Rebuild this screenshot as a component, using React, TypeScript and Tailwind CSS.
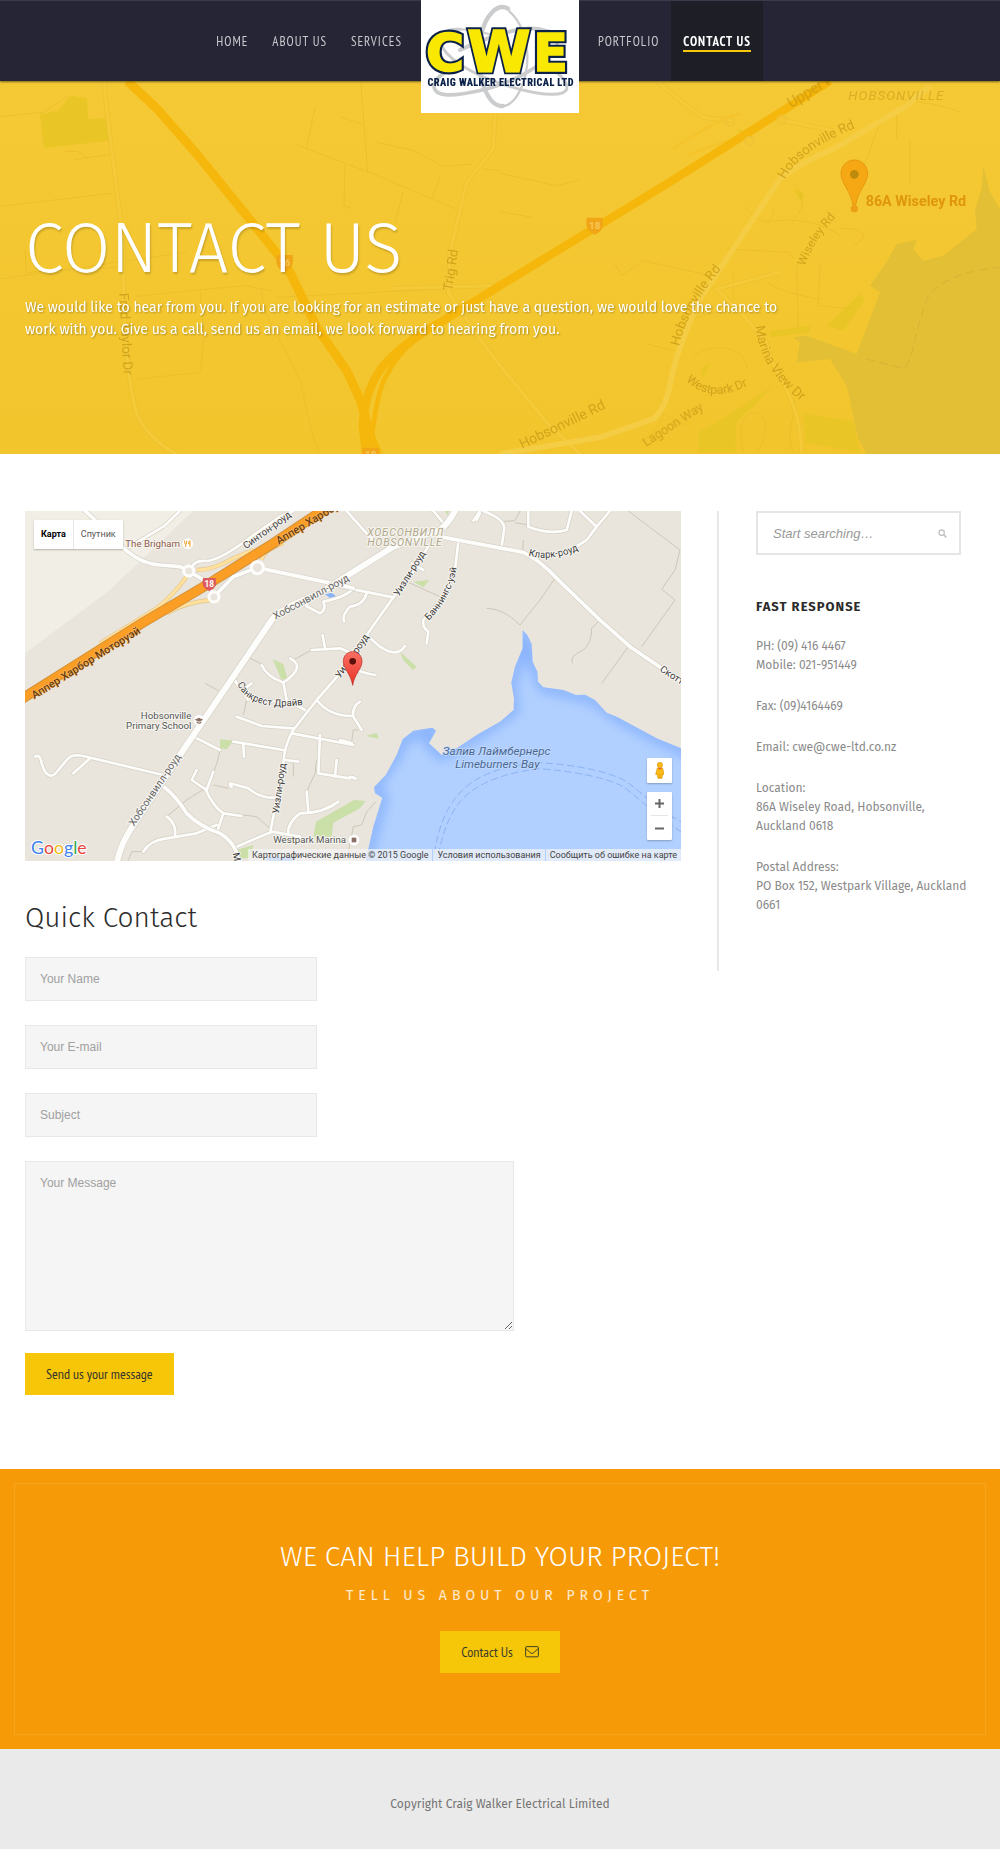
import type { ReactNode } from 'react';

/* ---------- Logo ---------- */

function Logo() {
  return (
    <svg viewBox="33 0 474 339" className="block w-full" role="img" aria-label="Craig Walker Electrical Ltd">
      <rect x="33" width="474" height="339" fill="#fff" />
      <g fill="none" stroke="#cbccce" strokeLinecap="round">
        <path d="M294 26 C262 8 226 45 212 110 C202 160 204 215 222 262 C236 298 256 320 278 318" strokeWidth="13" />
        <path d="M298 34 C330 62 350 110 352 165 C354 235 322 320 272 319" strokeWidth="7" />
        <path d="M150 88 C100 86 78 110 96 140 C125 190 215 238 330 268 C400 286 462 290 470 268 C476 245 440 212 400 188" strokeWidth="9" />
        <path d="M150 88 C200 88 240 102 290 120" strokeWidth="6" />
        <path d="M400 92 C440 94 452 116 436 145 C405 195 310 250 200 274 C125 290 76 290 72 262 C72 240 100 215 140 195" strokeWidth="11" />
        <path d="M405 92 C350 72 250 104 150 150" strokeWidth="12" />
      </g>
      <g
        fontFamily='"DejaVu Sans", sans-serif'
        fontWeight="700"
        fill="#f9e802"
        stroke="#0b2148"
        paintOrder="stroke"
      >
        <text x="48" y="213" fontSize="156" strokeWidth="18">C</text>
        <text x="370" y="214" fontSize="152" strokeWidth="18">E</text>
        <text x="172" y="217" fontSize="172" strokeWidth="16">W</text>
        <g strokeWidth="5" paintOrder="normal">
          <text x="48" y="213" fontSize="156" fill="#f9e802" stroke="#f9e802">C</text>
          <text x="370" y="214" fontSize="152" fill="#f9e802" stroke="#f9e802">E</text>
          <text x="172" y="217" fontSize="172" fill="#f9e802" stroke="#f9e802">W</text>
        </g>
      </g>
      <text
        x="272"
        y="258"
        textAnchor="middle"
        fontFamily='"Roboto Condensed", Roboto, sans-serif'
        fontWeight="900"
        fontSize="31"
        fill="#0b2148"
      >
        CRAIG WALKER ELECTRICAL LTD
      </text>
    </svg>
  );
}

/* ---------- Header ---------- */

function NavLink({ children, active = false }: { children: ReactNode; active?: boolean }) {
  return (
    <a
      href="#"
      aria-current={active ? 'page' : undefined}
      className={
        active
          ? 'flex h-full items-center bg-[#1e1e27] px-3 font-bold text-white'
          : 'flex h-full items-center px-3 text-[#c9c9ce] hover:text-white'
      }
    >
      <span className={active ? 'border-b-2 border-[#f8c809] pt-1 leading-4' : 'pt-0.5 leading-5'}>{children}</span>
    </a>
  );
}

function Header() {
  return (
    <header className="relative z-10 grid h-[81px] grid-cols-[1fr_158px_1fr] items-start border-t border-[#3a3a4a] bg-[#262535] text-[13px] tracking-[1px] shadow-[0_1px_2px_rgba(0,0,0,0.5)] [font-family:'PT_Sans_Narrow',sans-serif]">
      <nav aria-label="Main" className="flex h-20 justify-end pr-[7px]">
        <NavLink>HOME</NavLink>
        <NavLink>ABOUT US</NavLink>
        <NavLink>SERVICES</NavLink>
      </nav>
      <a href="#" className="-mt-px block">
        <Logo />
      </a>
      <nav aria-label="More" className="flex h-20 pl-[7px]">
        <NavLink>PORTFOLIO</NavLink>
        <NavLink active>CONTACT US</NavLink>
      </nav>
    </header>
  );
}

/* ---------- Hero ---------- */

const heroStreets = [
  'M0 113 L130 100 L205 50', 'M0 382 L335 343', 'M195 217 L235 217 L265 237', 'M222 242 L330 226',
  'M0 600 L560 520', 'M75 510 L80 580 L350 565', 'M410 652 L600 632 L735 620 L820 637', 'M600 632 L612 780 L600 880 L410 900',
  'M785 635 C790 730 870 820 905 920 C920 1000 935 1060 955 1120', 'M945 85 L920 205', 'M888 197 L1120 285 L1370 390',
  'M1082 6 L1103 282', 'M1035 255 L1032 380 L1055 388', 'M1210 335 L1185 430', 'M1132 190 L1240 215 L1330 262 L1415 255',
  'M1450 270 L1500 275', 'M1322 290 L1298 355', 'M1020 113 L1085 135', 'M830 655 L1320 630', 'M540 455 L510 500',
  'M1500 283 L1670 320 L1735 303', 'M1500 398 L1600 415', 'M1845 555 L1865 590 L1930 545 L2130 590',
  'M2230 380 C2280 440 2320 440 2320 390', 'M2380 315 C2430 360 2400 400 2370 440', 'M2300 430 C2400 410 2480 440 2520 470',
  'M2180 510 L2370 520 L2380 540', 'M2390 560 L2395 750', 'M2200 585 L2200 660', 'M2300 610 C2350 640 2400 650 2460 660',
  'M2460 560 L2455 680 L2560 690', 'M2520 450 C2580 440 2620 470 2560 500', 'M2040 740 C2100 700 2200 690 2260 700',
  'M2080 830 C2140 790 2240 800 2240 870', 'M1940 795 L2020 815', 'M2060 890 L2120 930 L2200 940 M1980 960 C2010 1010 1970 1060 1920 1090',
  'M2230 1120 C2210 1040 2230 1000 2270 1000 C2310 1020 2300 1080 2270 1120', 'M2380 960 C2400 990 2350 1050 2380 1120',
  'M2630 30 C2700 80 2800 60 2880 100', 'M2690 90 L2690 180 M2730 180 L2730 320', 'M2640 130 L2600 240 L2560 330', 'M2000 1010 L2060 1040',
];

const heroRoads = [
  'M312 6 C320 120 350 300 372 520 C365 700 380 900 412 1010 C440 1070 500 1110 530 1125',
  'M1485 100 L1480 210 L1400 310 L1350 520 L1345 640 L1440 780 L1500 860 L1640 1030 L1740 1125',
  'M1175 628 L1500 620', 'M1970 6 L2060 80 L2110 115 L2190 125 M2350 125 L2500 155', 'M2340 580 L2150 630 L2230 710 L2300 790 C2310 880 2400 940 2405 1120',
];

function HeroMap() {
  return (
    <svg
      viewBox="0 6 3000 1119"
      preserveAspectRatio="xMidYMid slice"
      className="absolute inset-0 h-full w-full"
      aria-hidden="true"
    >
      <defs>
        <linearGradient id="heroLand" x1="0" y1="0" x2="0" y2="1">
          <stop offset="0" stopColor="#f5c935" />
          <stop offset="1" stopColor="#f2c52d" />
        </linearGradient>
      </defs>
      <rect width="3000" height="1130" fill="url(#heroLand)" />
      <path
        d="M2950 262 L2970 340 L3000 390 V1125 H2600 L2575 1080 L2540 920 L2490 840 L2390 850 L2400 790 L2380 775 L2420 770 L2570 825 L2640 640 L2610 620 L2660 550 L2690 495 L2750 482 L2740 510 L2770 545 L2830 530 L2930 450 L2925 390 L2945 330 Z"
        fill="#e2bf35"
      />
      <path d="M2600 840 L2710 868 Q2730 860 2750 760 L2780 660 Q2830 580 3000 565" fill="none" stroke="#d8b636" strokeWidth="4" strokeDasharray="26 14" />
      <g fill="#e9c625">
        <path d="M120 105 L175 95 L210 50 L260 58 L265 120 L323 118 L327 185 L132 207 Z" />
        <path d="M2410 1005 L2560 1025 L2580 1120 L2415 1090 Z" />
        <path d="M2095 1060 L2200 1000 L2320 920 L2210 1030 L2205 1120 H2095 Z" />
        <path d="M2480 740 L2580 645 L2595 660 L2530 755 Z M2310 755 L2430 740 L2430 760 L2310 775 Z" />
        <path d="M2105 870 L2130 850 L2110 900 Z M2380 330 L2412 345 L2405 370 Z M2675 312 L2710 340 Z M2210 150 L2240 155 L2220 162 Z" />
      </g>
      <g fill="none" stroke="#e8bb2a" strokeWidth="3" opacity="0.7">
        {heroStreets.map((d) => <path key={d} d={d} />)}
      </g>
      <g fill="none">
        <g stroke="#ecc02d" strokeWidth="14">{heroRoads.map((d) => <path key={d} d={d} />)}</g>
        <g stroke="#f5ca38" strokeWidth="10">{heroRoads.map((d) => <path key={d} d={d} />)}</g>
        <path d="M1500 1125 L1800 1075 L1960 1020 Q1995 990 2010 920 Q2025 820 2100 660 L2340 300 Q2400 250 2500 210 L2720 80 L2790 20" stroke="#f5cd45" strokeWidth="17" />
        <path d="M2020 210 Q2150 120 2220 105 M2060 230 Q2200 175 2260 170" stroke="#f5c32b" strokeWidth="8" />
        <g stroke="#f5b70c">
          <path d="M382 6 L470 88 L590 225 L720 385 L860 560 L950 745 L1040 875 L1080 960 L1118 1090 L1135 1125" strokeWidth="27" />
          <path d="M1098 1125 L1088 1040 Q1095 930 1150 860 Q1210 790 1330 725 L1500 620 L2000 315 L2490 6" strokeWidth="25" />
          <path d="M1115 1085 Q1130 930 1165 880 Q1200 810 1280 760" strokeWidth="14" />
        </g>
        <g stroke="#f0c236" strokeWidth="5">
          <circle cx="2190" cy="128" r="13" />
          <circle cx="2345" cy="122" r="13" />
          <circle cx="2248" cy="186" r="13" />
        </g>
      </g>
      <g fill="#f0a616">
        <path d="M1760 416 H1808 Q1815 455 1784 467 Q1753 455 1760 416 Z" />
        <path d="M830 528 H878 Q885 567 854 579 Q823 567 830 528 Z" />
        <path d="M1088 1106 H1136 Q1143 1145 1112 1157 Q1081 1145 1088 1106 Z" />
      </g>
      <g fontFamily="Roboto, sans-serif" fontSize="40" fill="#bb8d10" opacity="0.6">
        <g fontSize="29" fontWeight="700" fill="#fbe08a" textAnchor="middle">
          <text x="1784" y="451">18</text>
          <text x="854" y="562">16</text>
          <text x="1112" y="1138">18</text>
        </g>
        <text x="2545" y="64" fontStyle="italic" fontSize="40" letterSpacing="3" opacity="0.75">HOBSONVILLE</text>
        <text transform="translate(2374 88) rotate(-32)" fontSize="44">Upper Harbour</text>
        <text transform="translate(1357 637) rotate(-82)" fontSize="40">Trig Rd</text>
        <text transform="translate(358 643) rotate(87)">Fred Taylor Dr</text>
        <text transform="translate(1567 1110) rotate(-26)" fontSize="42">Hobsonville Rd</text>
        <path id="hobA" d="M2355 302 Q2400 210 2580 142" fill="none" />
        <text><textPath href="#hobA">Hobsonville Rd</textPath></text>
        <path id="hobB" d="M2038 802 Q2060 690 2180 550" fill="none" />
        <text><textPath href="#hobB">Hobsonville Rd</textPath></text>
        <path id="wis" d="M2415 562 Q2440 480 2530 390" fill="none" />
        <text fontSize="36"><textPath href="#wis">Wiseley Rd</textPath></text>
        <path id="mar" d="M2267 742 Q2280 890 2450 1000" fill="none" />
        <text fontSize="40"><textPath href="#mar">Marina View Dr</textPath></text>
        <path id="west" d="M2058 905 Q2140 985 2270 905" fill="none" />
        <text fontSize="37"><textPath href="#west">Westpark Dr</textPath></text>
        <text transform="translate(1938 1104) rotate(-33)" fontSize="38">Lagoon Way</text>
      </g>
      <g>
        <path d="M2563 243 C2538 243 2523 263 2523 285 C2523 312 2552 335 2559 378 H2567 C2574 335 2603 312 2603 285 C2603 263 2588 243 2563 243 Z" fill="#f5a714" stroke="#e6980f" strokeWidth="3" />
        <circle cx="2563" cy="286" r="13" fill="#bd8a0c" />
        <circle cx="2563" cy="389" r="11" fill="#eea014" />
        <text x="2597" y="382" fontFamily="Roboto, sans-serif" fontWeight="700" fontSize="43" fill="#df960a">86A Wiseley Rd</text>
      </g>
    </svg>
  );
}

function Hero() {
  return (
    <section className="relative overflow-hidden bg-[#f4c731] px-[25px] pb-[113px] pt-[133px] text-white">
      <HeroMap />
      <div className="relative">
        <h1 className="text-[70px] font-light leading-[70px] [text-shadow:1px_2px_2px_rgba(0,0,0,0.18)]">CONTACT US</h1>
        <p className="mt-[13px] max-w-[780px] text-sm leading-[22px] [text-shadow:1px_1px_2px_rgba(0,0,0,0.3)]">
          We would like to hear from you. If you are looking for an estimate or just have a question, we would love the
          chance to work with you. Give us a call, send us an email, we look forward to hearing from you.
        </p>
      </div>
    </section>
  );
}

/* ---------- Location map ---------- */

const mainRoads = [
  'M350 1090 Q362 1030 400 975 L560 735 L700 530 L815 360 Q840 325 960 280 L1040 228 L1180 140 L1320 90 Q1345 70 1365 33',
];

const midRoads = [
  'M255 33 L330 100 Q400 190 480 195 L540 200 L566 213 L628 250 L642 290 L700 230 L772 203 L985 248 L1060 265',
  'M485 855 Q530 890 560 940 Q600 980 660 1000 Q710 1030 715 1085',
  'M1320 110 L1570 157 Q1620 180 1670 235 L1800 360 L1890 440 L1985 505 L2050 550',
];

const smallRoads = [
  'M380 145 L490 80 L540 33', 'M575 205 Q580 180 620 183 Q660 180 740 120 L840 50 L880 33',
  'M105 770 Q120 760 125 790 Q140 840 165 822 L200 780 Q215 760 250 768 L490 825', 'M270 775 L220 820',
  'M1040 33 L1135 140', 'M1020 260 L1180 292 M1300 33 L1340 80',
  'M1290 130 L1240 215 L1180 292 L1100 405 L1020 520 L950 600 L880 690 Q850 740 850 800 L810 1000',
  'M1375 125 L1365 210 L1330 290 L1270 360 Q1265 380 1285 395 L1280 430',
  'M1450 33 Q1520 60 1512 90 L1505 140', 'M1440 33 L1420 62', 'M1585 33 L1585 80 Q1650 105 1700 90 L1715 33', 'M1740 33 L1790 80 L1760 120 L1720 145 M1830 33 L1790 80',
  'M1100 405 L1140 440 Q1190 475 1215 438', 'M1060 505 Q1090 520 1127 525', 'M1100 280 Q1090 315 1050 320 Q1025 345 1032 365',
  'M985 260 Q930 280 918 318 L960 340 Q980 330 970 305 Q1040 290 1060 265', 'M968 405 L975 445 M935 450 L1020 445 Q1060 460 1070 475',
  'M700 535 L745 600 M730 570 L755 550', 'M785 495 Q800 530 850 548 Q920 500 870 475 M850 548 L860 600 L915 630',
  'M700 535 Q740 610 890 608', 'M710 650 L785 678 L880 685', 'M875 700 L1060 735 M960 705 L955 820 L1050 835', 'M1010 780 L1005 830',
  'M950 600 Q990 650 1060 648 M1080 605 Q1055 620 1060 650 L1085 690', 'M1020 720 L1055 730 M1050 830 Q1080 840 1058 832',
  'M580 710 L660 750', 'M700 725 L850 750 M730 735 L732 770', 'M590 810 L575 840 L620 870 L640 815 M615 865 Q640 920 670 940 L650 1000',
  'M670 940 L725 948', 'M690 855 Q700 870 690 850 L745 865 Q780 895 825 893', 'M855 780 L895 785', 'M920 875 L925 935 M1015 905 Q970 940 900 940 Q860 970 865 1005',
  'M500 950 Q530 970 525 1010', 'M430 1055 Q450 1020 500 1015 L590 1000 L650 975', 'M710 1040 L815 995 L900 1010', 'M1235 190 L1270 210', 'M1440 40 L1430 60',
];

const paths = [
  'M615 550 L655 572', 'M745 472 L790 495', 'M880 480 L935 450', 'M1220 245 L1320 290', 'M1460 325 Q1510 325 1560 375 L1620 300 L1665 235',
  'M1570 120 L1568 155', 'M1500 65 L1545 62 L1560 33 M1545 68 L1585 75', 'M1885 33 L2040 150 L2025 210 L1985 268 L2025 300 L1925 440', 'M1885 440 L1805 550',
  'M1800 360 L1775 385 Q1775 430 1750 450 Q1705 470 1718 490', 'M660 750 Q650 800 640 815 M640 855 L685 865', 'M500 950 L560 900 L615 865',
  'M950 780 L945 820 L920 875', 'M730 945 L770 950 L815 990', 'M880 785 L880 830', 'M1128 905 L1100 935 L1085 975 L1060 980 L1040 1082',
  'M740 600 L730 645', 'M385 1082 L395 1055 L430 1055', 'M1075 690 L1060 690 L1055 725',
];

const parks = [
  'M818 478 L850 492 L862 535 L845 540 Z', 'M1200 455 L1250 500 L1238 510 L1210 480 Z', 'M1240 245 L1288 240 L1270 262 Z',
  'M660 718 L700 722 L680 748 L660 745 Z', 'M1097 708 L1130 698 L1136 716 Z', 'M948 965 L1062 900 L1097 903 L1080 925 L1000 968 L995 1010 L940 1010 Z', 'M710 1050 L760 1035 L750 1075 L715 1075 Z', 'M1335 33 L1348 33 L1342 45 Z',
];

function RoadSet({ roads, width }: { roads: string[]; width: number }) {
  return (
    <g fill="none" strokeLinecap="round" strokeLinejoin="round">
      {roads.map((d) => <path key={`c${d}`} d={d} stroke="#d6d1c6" strokeWidth={width + 4} />)}
      {roads.map((d) => <path key={d} d={d} stroke="#fdfdfb" strokeWidth={width} />)}
    </g>
  );
}

function AreaMap() {
  return (
    <svg viewBox="75 33 1968 1050" className="block w-full" role="img" aria-label="Map of Hobsonville">
      <defs>
        <clipPath id="bayClip"><use href="#bay" /></clipPath>
        <filter id="soft" x="-10%" y="-10%" width="120%" height="120%"><feGaussianBlur stdDeviation="18" /></filter>
        <linearGradient id="pin" x1="0" y1="0" x2="0" y2="1">
          <stop offset="0" stopColor="#fb7064" />
          <stop offset="1" stopColor="#e93125" />
        </linearGradient>
      </defs>
      <rect x="75" y="33" width="1968" height="1050" fill="#e9e5dd" />
      <path d="M75 33 H580 L430 175 L330 270 L75 460 Z" fill="#f0eee5" />
      <g fill="#cbdfa9">{parks.map((d) => <path key={d} d={d} />)}</g>
      <path
        id="bay"
        d="M1568 390 L1582 405 L1595 432 L1598 485 L1612 515 L1614 545 L1630 562 L1690 570 L1728 585 L1755 584 L1785 600 L1820 638 L1850 650 L1970 715 L2043 745 V1083 H1097 L1120 980 L1147 893 L1125 880 L1122 862 L1158 824 L1190 765 L1208 718 L1240 692 L1298 683 L1308 692 L1287 730 L1325 765 L1370 745 L1430 705 L1500 665 L1541 630 L1542 595 L1534 548 L1545 500 L1568 445 Z"
        fill="#b1d0ff"
      />
      <g clipPath="url(#bayClip)">
        <path
          d="M2080 765 L1970 715 L1850 650 L1785 600 L1728 585 L1630 562 L1598 485 L1568 390 L1568 445 L1534 548 L1541 630 L1430 705 L1325 765 L1287 730 L1298 683 L1208 718 L1190 765 L1122 862 L1147 893 L1097 1083"
          fill="none"
          stroke="#86b0fc"
          strokeWidth="30"
          filter="url(#soft)"
        />
      </g>
      <path d="M975 283 L995 278 L1010 290 L990 294 Z M800 1070 H880 V1083 H800 Z" fill="#8ab4f8" />
      <g fill="none" stroke="#8bb2f2" strokeWidth="3" strokeDasharray="22 10">
        <path d="M1303 1060 Q1320 950 1370 890 Q1440 800 1620 788 Q1800 800 1880 845 Q1920 875 1980 930 L2043 965" />
        <path d="M1315 1065 Q1335 960 1380 905 Q1450 825 1620 806 Q1790 820 1870 860 Q1910 890 1970 945 L2043 995" />
      </g>
      <g fill="none" stroke="#cdc7b8" strokeWidth="3">{paths.map((d) => <path key={d} d={d} />)}</g>
      <g fill="none">
        <g stroke="#e2c690" strokeWidth="13">
          <path d="M300 430 L470 325 Q520 285 560 230 M590 210 Q640 210 700 175 L760 150 M500 340 Q560 305 635 300 M785 180 Q790 150 850 130" />
        </g>
        <g stroke="#ffe09c" strokeWidth="9">
          <path d="M300 430 L470 325 Q520 285 560 230 M590 210 Q640 210 700 175 L760 150 M500 340 Q560 305 635 300 M785 180 Q790 150 850 130" />
        </g>
      </g>
      <RoadSet roads={smallRoads} width={8} />
      <RoadSet roads={midRoads} width={11} />
      <RoadSet roads={mainRoads} width={18} />
      <g fill="none">
        <path d="M60 600 L425 370 L628 250 L820 130 L985 20" stroke="#d4913a" strokeWidth="31" />
        <path d="M60 600 L425 370 L628 250 L820 130 L985 20" stroke="#fb9e25" strokeWidth="25" />
      </g>
      <g fill="#e9e5dd" stroke="#fdfdfb" strokeWidth="9">
        <circle cx="566" cy="213" r="15" />
        <circle cx="772" cy="203" r="18" />
        <circle cx="642" cy="291" r="15" />
      </g>
      <path d="M609 234 H647 Q655 264 628 273 Q601 264 609 234 Z" fill="#dd5b5f" />
      <g
        fontFamily="Roboto, sans-serif"
        fontSize="29"
        fill="#3a3a3a"
        stroke="#f7f5f0"
        strokeWidth="6"
        strokeLinejoin="round"
        paintOrder="stroke"
      >
        <text x="628" y="260" textAnchor="middle" fontSize="25" fontWeight="700" fill="#fff" stroke="none">18</text>
        <g fill="#6b3c0c" stroke="#fbc16e" strokeWidth="3" fontSize="33" fontWeight="500">
          <text transform="translate(103 598) rotate(-32)">Аппер Харбор Моторуэй</text>
          <text transform="translate(836 134) rotate(-31)">Аппер Харбор</text>
        </g>
        <text transform="translate(738 148) rotate(-36)">Синтон-роуд</text>
        <text transform="translate(826 359) rotate(-28)" fontSize="31" fill="#666">Хобсонвилл-роуд</text>
        <text transform="translate(402 980) rotate(-56)" fontSize="31" fill="#666">Хобсонвилл-роуд</text>
        <path id="sancrest" d="M712 552 Q750 640 925 612" fill="none" stroke="none" />
        <text><textPath href="#sancrest">Санкрест Драйв</textPath></text>
        <text transform="translate(836 942) rotate(-82)">Уизли-роуд</text>
        <text transform="translate(1196 290) rotate(-58)">Уизли-роуд</text>
        <text transform="translate(1020 536) rotate(-55)">Уизли-роуд</text>
        <path id="bann" d="M1286 362 Q1360 290 1374 180" fill="none" stroke="none" />
        <text><textPath href="#bann">Баннингс-уэй</textPath></text>
        <path id="clark" d="M1585 166 Q1660 190 1770 135" fill="none" stroke="none" />
        <text><textPath href="#clark">Кларк-роуд</textPath></text>
        <text transform="translate(1978 512) rotate(33)">Скотт-роуд</text>
        <text transform="translate(698 1060) rotate(80)">Марина</text>
        <text x="540" y="140" textAnchor="end" fill="#8d5b4c">The Brigham</text>
        <g textAnchor="end" fill="#555">
          <text x="574" y="656">Hobsonville</text>
          <text x="574" y="686">Primary School</text>
          <text x="1038" y="1030">Westpark Marina</text>
        </g>
        <g fontStyle="italic" fontSize="32" letterSpacing="2" fill="#b0a88c">
          <text x="1102" y="107">ХОБСОНВИЛЛ</text>
          <text x="1102" y="138">HOBSONVILLE</text>
        </g>
        <g fontStyle="italic" fontSize="35" textAnchor="middle" fill="#49678f" stroke="#c4dbff" strokeWidth="4">
          <text x="1490" y="766">Залив Лаймбернерс</text>
          <text x="1492" y="804">Limeburners Bay</text>
        </g>
        <text x="93" y="1062" fontFamily="Lato, sans-serif" fontSize="53" stroke="#fff">
          <tspan fill="#3d82f0">G</tspan>
          <tspan fill="#e8453c">o</tspan>
          <tspan fill="#f5b912">o</tspan>
          <tspan fill="#3d82f0">g</tspan>
          <tspan fill="#34a853">l</tspan>
          <tspan fill="#e8453c">e</tspan>
        </text>
      </g>
      <circle cx="563" cy="131" r="16" fill="#fff" />
      <path d="M554 122 V129 Q554 132 557 132 V141 M560 122 V129 Q560 132 557 132 M570 141 V122 Q565 124 566 132 H570" fill="none" stroke="#f0a02c" strokeWidth="3" />
      <circle cx="597" cy="661" r="16" fill="#fff" />
      <path d="M584 659 L597 653 L610 659 L597 665 Z M590 664 V669 Q597 674 604 669 V664 L597 668 Z" fill="#8d6e63" />
      <circle cx="1062" cy="1020" r="16" fill="#fff" />
      <rect x="1055" y="1013" width="14" height="14" fill="#8d6e63" />
      <path
        d="M1058 455 C1040 455 1030 469 1030 484 C1030 507 1052 520 1058 556 C1064 520 1086 507 1086 484 C1086 469 1076 455 1058 455 Z"
        fill="url(#pin)"
        stroke="#b3271f"
        strokeWidth="2"
      />
      <circle cx="1058" cy="484" r="10" fill="#5c100c" />
    </svg>
  );
}

function LocationMap() {
  return (
    <div className="relative overflow-hidden text-[9px] [font-family:Roboto,sans-serif]">
      <AreaMap />
      <div className="absolute left-[9px] top-[9px] flex h-[29px] rounded-[1px] bg-white shadow-[0_1px_2px_rgba(0,0,0,0.25)]">
        <button type="button" className="border-r border-[#e6e6e6] px-[7px] font-bold text-black">Карта</button>
        <button type="button" className="px-[7px] text-[#565656]">Спутник</button>
      </div>
      <div className="absolute bottom-[21px] right-[9px] flex w-[25px] flex-col gap-[9px]">
        <button
          type="button"
          aria-label="Street View"
          className="flex h-[25px] items-center justify-center rounded-[1px] bg-white shadow-[0_1px_2px_rgba(0,0,0,0.25)]"
        >
          <svg viewBox="0 0 30 52" className="h-[17px]" aria-hidden="true">
            <circle cx="15" cy="9" r="8" fill="#fbb916" stroke="#d8930d" strokeWidth="2" />
            <path d="M7 18 H23 L28 38 L23 39 L21 50 H9 L7 39 L2 38 Z" fill="#fbb916" stroke="#d8930d" strokeWidth="2" />
            <path d="M10 18 L15 24 L20 18 Z" fill="#e5552b" />
            <path d="M15 36 V50" stroke="#d8930d" strokeWidth="2" />
          </svg>
        </button>
        <div className="flex flex-col rounded-[1px] bg-white px-1 shadow-[0_1px_2px_rgba(0,0,0,0.25)]">
          <button type="button" aria-label="Zoom in" className="flex h-6 items-center justify-center border-b border-[#e6e6e6]">
            <svg viewBox="0 0 9 9" className="h-[9px]" aria-hidden="true"><path d="M0 4.5H9M4.5 0V9" stroke="#666" strokeWidth="2" /></svg>
          </button>
          <button type="button" aria-label="Zoom out" className="flex h-6 items-center justify-center">
            <svg viewBox="0 0 9 9" className="h-[9px]" aria-hidden="true"><path d="M0 4.5H9" stroke="#666" strokeWidth="2" /></svg>
          </button>
        </div>
      </div>
      <div className="absolute bottom-0 right-0 flex gap-px whitespace-nowrap leading-3 text-[#444]">
        <span className="bg-[#f5f5f5]/70 px-1">Картографические данные © 2015 Google</span>
        <a href="#" className="bg-[#f5f5f5]/70 px-1">Условия использования</a>
        <a href="#" className="bg-[#f5f5f5]/70 px-1">Сообщить об ошибке на карте</a>
      </div>
    </div>
  );
}

/* ---------- Form ---------- */

function Field({ id, label, type = 'text' }: { id: string; label: string; type?: string }) {
  return (
    <div>
      <label htmlFor={id} className="sr-only">{label}</label>
      <input
        id={id}
        type={type}
        placeholder={label}
        className="block h-11 w-full max-w-[292px] border border-[#e8e8e8] bg-[#f5f5f5] px-[14px] text-xs placeholder:text-[#a0a0a0] [font-family:'Liberation_Sans',sans-serif]"
      />
    </div>
  );
}

function ContactForm() {
  return (
    <form className="mt-10">
      <h2 className="text-[28px] font-light leading-[34px] text-[#2c2c2c]">Quick Contact</h2>
      <div className="mt-[22px] flex flex-col gap-6">
        <Field id="name" label="Your Name" />
        <Field id="email" label="Your E-mail" type="email" />
        <Field id="subject" label="Subject" />
        <div>
          <label htmlFor="message" className="sr-only">Your Message</label>
          <textarea
            id="message"
            placeholder="Your Message"
            className="block h-[170px] w-full max-w-[489px] resize border border-[#e8e8e8] bg-[#f5f5f5] px-[14px] py-[13px] text-xs leading-4 placeholder:text-[#a0a0a0] [font-family:'Liberation_Sans',sans-serif]"
          />
        </div>
      </div>
      <button
        type="submit"
        className="mt-[22px] h-[42px] bg-[#f8c609] px-[21px] text-sm text-[#33332c] [font-family:'PT_Sans_Narrow',sans-serif]"
      >
        Send us your message
      </button>
    </form>
  );
}

/* ---------- Sidebar ---------- */

function Sidebar() {
  return (
    <aside className="w-[258px] shrink-0 self-start border-l-2 border-[#e8e8e8] pb-14 pl-[37px]">
      <form role="search" className="flex h-[44px] max-w-[205px] items-center border-2 border-[#e5e5e5] bg-white pl-[15px] pr-3">
        <label htmlFor="search" className="sr-only">Search</label>
        <input
          id="search"
          type="text"
          placeholder="Start searching…"
          className="h-full min-w-0 flex-1 text-[13px] italic outline-none placeholder:text-[#999] [font-family:'Liberation_Sans',sans-serif]"
        />
        <button type="submit" aria-label="Search">
          <svg viewBox="0 0 27 27" className="h-[9px] w-[9px]" fill="none" stroke="#c4c4c4" aria-hidden="true">
            <circle cx="11" cy="11" r="8" strokeWidth="4" />
            <path d="M17 17 L25 25" strokeWidth="5" />
          </svg>
        </button>
      </form>
      <h3 className="mt-[42px] text-[13px] font-bold leading-5 tracking-[1px] text-[#2b2b2b]">FAST RESPONSE</h3>
      <address className="mt-5 flex flex-col gap-[22px] text-xs leading-[19px] text-[#8a8a8a] not-italic">
        <p>PH: (09) 416 4467<br />Mobile: 021-951449</p>
        <p>Fax: (09)4164469</p>
        <p>Email: <a href="mailto:cwe@cwe-ltd.co.nz">cwe@cwe-ltd.co.nz</a></p>
        <p>Location:<br />86A Wiseley Road, Hobsonville,<br />Auckland 0618</p>
        <p>Postal Address:<br />PO Box 152, Westpark Village, Auckland 0661</p>
      </address>
    </aside>
  );
}

/* ---------- Call to action ---------- */

function CallToAction() {
  return (
    <section className="bg-[#f79a08] p-[14px] text-center text-white">
      <div className="border border-white/10 pb-[61px] pt-14">
        <h2 className="text-[28px] font-light leading-[34px]">WE CAN HELP BUILD YOUR PROJECT!</h2>
        <p className="mt-3 text-sm leading-5 tracking-[5px] text-white/80">TELL US ABOUT OUR PROJECT</p>
        <a
          href="#"
          className="mt-[25px] inline-flex h-[42px] items-center gap-3 bg-[#f6c709] px-[21px] align-top text-sm text-[#3a3a2c] [font-family:'PT_Sans_Narrow',sans-serif]"
        >
          Contact Us
          <svg viewBox="0 0 44 36" className="w-[14px]" fill="none" stroke="currentColor" strokeWidth="3" strokeLinejoin="round" aria-hidden="true">
            <rect x="2" y="2" width="40" height="32" rx="3" />
            <path d="M2 8 L18 22 Q22 25 26 22 L42 8" />
          </svg>
        </a>
      </div>
    </section>
  );
}

export default function App() {
  return (
    <div className="bg-white [font-family:'Fira_Sans','Noto_Sans',sans-serif]">
      <Header />
      <Hero />
      <main className="flex items-stretch px-[25px] pb-[74px] pt-[57px]">
        <div className="min-w-0 flex-1 pr-9">
          <LocationMap />
          <ContactForm />
        </div>
        <Sidebar />
      </main>
      <CallToAction />
      <footer className="bg-[#eaeaea] pb-[35px] pt-[45px] text-center text-xs leading-5 text-[#757575]">
        Copyright Craig Walker Electrical Limited
      </footer>
    </div>
  );
}
